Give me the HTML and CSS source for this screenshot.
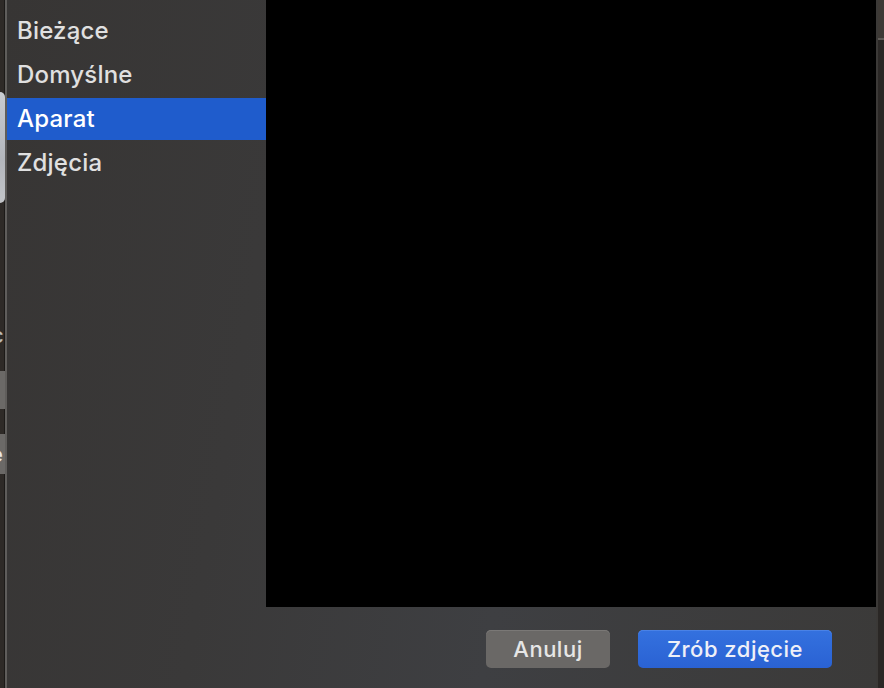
FILE: index.html
```html
<!DOCTYPE html>
<html lang="pl">
<head>
    <meta charset="UTF-8">
    <title>Zrób zdjęcie</title>
<link rel="stylesheet" href="styles.css">
</head>
<body>
    <div class="screen">
        <div class="behind">
            <div class="behind-patch"></div>
            <div class="behind-letter">c</div>
            <div class="behind-box"></div>
            <div class="behind-box behind-box-text">e</div>
        </div>

        <div class="dialog">
            <ul class="sources">
                <li class="source">Bieżące</li>
                <li class="source">Domyślne</li>
                <li class="source selected">Aparat</li>
                <li class="source">Zdjęcia</li>
            </ul>

            <div class="preview"></div>

            <div class="actions">
                <button class="button" type="button">Anuluj</button>
                <button class="button primary" type="button">Zrób zdjęcie</button>
            </div>
        </div>

        <div class="behind-right">
            <div class="behind-right-top"></div>
        </div>
    </div>
</body>
</html>
```

FILE: styles.css
```css
* {
    box-sizing: border-box;
}

body, button {
    font-family: Inter, 'Helvetica Neue', 'Liberation Sans', sans-serif;
    font-size: 24px;
    font-weight: 500;
}

body {
    margin: 0;
    background-color: #2d2926;
    overflow: hidden;
}

.screen {
    display: flex;
    width: 884px;
    height: 688px;
}

/* strip of the window behind the dialog */
.behind {
    width: 7px;
    flex-shrink: 0;
    background-color: #2e2a27;
    border-right: 2px solid #5f5d5b;
    box-shadow: inset -1px 0 0 #1c1a18;
    overflow: hidden;
    display: flex;
    flex-direction: column;
}

.behind-patch {
    width: 5px;
    height: 111px;
    margin-top: 92px;
    border-radius: 0 6px 6px 0;
    background: linear-gradient(#c9ccd1, #b3b6bc 60%, #c2c4c8);
}

.behind-letter {
    width: 5px;
    margin-top: 118px;
    color: #bdbab6;
    font-size: 22px;
    line-height: 28px;
    text-indent: -9px;
}

.behind-box {
    width: 5px;
    height: 38px;
    margin-top: 22px;
    background-color: #6b6967;
}

.behind-box-text {
    height: 40px;
    margin-top: 25px;
    color: #e8e8e8;
    font-size: 22px;
    line-height: 40px;
    text-indent: -10px;
    overflow: hidden;
}

.dialog {
    width: 869px;
    flex-shrink: 0;
    display: grid;
    grid-template-columns: 259px 1fr;
    grid-template-rows: 607px 1fr;
    background: linear-gradient(100deg, #373534 0%, #3a3939 30%, #3e3f42 60%, #3b3a39 100%);
}

.sources {
    grid-row: 1 / 3;
    list-style: none;
    margin: 0;
    padding: 10px 0 0;
}

.source {
    height: 42px;
    margin-bottom: 2px;
    padding-left: 10px;
    line-height: 42px;
    color: #e0e0e0;
    letter-spacing: 0.2px;
}

.source.selected {
    background-color: #1f5ccc;
    color: #fff;
}

.preview {
    background-color: #000;
}

.actions {
    display: flex;
    justify-content: flex-end;
    align-items: flex-start;
    gap: 28px;
    padding: 23px 44px 0 0;
}

.button {
    height: 38px;
    border: 0;
    border-radius: 5px;
    background-color: #6a6866;
    box-shadow: inset 0 1px 0 #7a7876;
    color: #e6e6e6;
    font-size: 22px;
    letter-spacing: 0.5px;
}

.button:first-child {
    width: 124px;
}

.primary {
    width: 194px;
    background: linear-gradient(#3471df, #2a62d3);
    box-shadow: inset 0 1px 0 #4a82e6;
    color: #eef0f8;
}

.behind-right {
    flex: 1;
    background-color: #2a2725;
    border-left: 2px solid #3b3937;
}

.behind-right-top {
    height: 40px;
    background-color: #3d3935;
    border-bottom: 2px solid #5e5a56;
}
```
